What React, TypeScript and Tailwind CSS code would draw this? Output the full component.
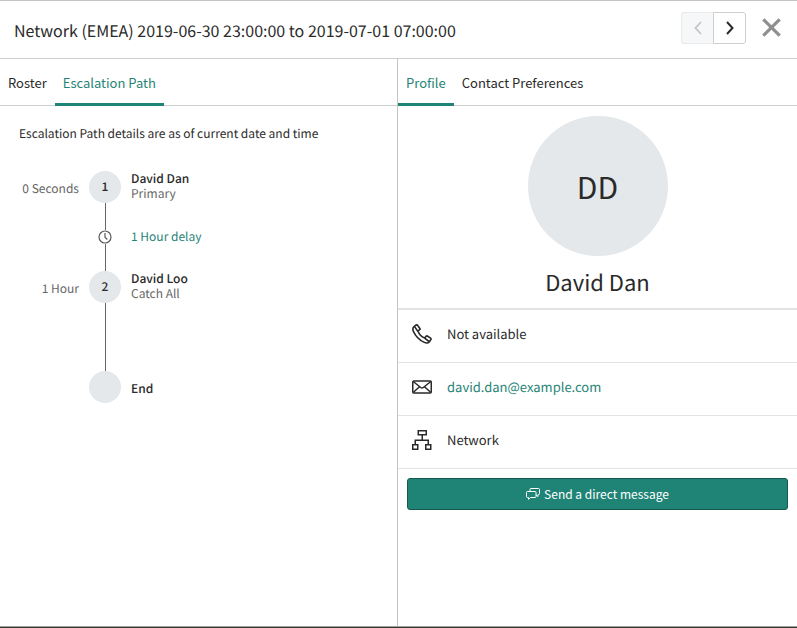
import React from 'react';

type Step = {
  time: string;
  badge: string;
  name: string;
  role?: string;
};

const steps: Step[] = [
  { time: '0 Seconds', badge: '1', name: 'David Dan', role: 'Primary' },
  { time: '1 Hour', badge: '2', name: 'David Loo', role: 'Catch All' },
  { time: '', badge: '', name: 'End' },
];

function ClockIcon() {
  return (
    <svg width="14" height="14" viewBox="0 0 14 14" fill="none" stroke="#5a5a5a" strokeWidth="1.2">
      <circle cx="7" cy="7" r="6" />
      <path d="M7 3v4.2l2.3 2.3" />
    </svg>
  );
}

function PhoneIcon() {
  return (
    <svg width="20" height="20" viewBox="0 0 20 20" fill="none" stroke="#2a2a2a" strokeWidth="1.6" strokeLinejoin="round">
      <path d="M2.2 2.4 4.2 1c.5-.3 1-.2 1.300.2L7.900 4.400c.3.4.2.9-.2 1.200L5.900 7.100c.9 2.600 4 5.900 6.800 6.900l1.400-1.800c.3-.4.8-.5 1.200-.2l3.300 2.200c.5.300.6.8.3 1.300l-1.500 2.200c-1.200 1.600-3.700 1.400-5.600.4C8 16.300 3.400 11.600 1.500 7.600.6 5.600.7 3.500 2.200 2.400Z" />
      <path d="m2.600 2.600 3.200 4.600M12.700 14.200l4.300 3.300" />
    </svg>
  );
}

function MailIcon() {
  return (
    <svg width="20" height="20" viewBox="0 0 20 20" fill="none" stroke="#2a2a2a" strokeWidth="1.5" strokeLinejoin="round">
      <rect x="0.75" y="4" width="18.5" height="12" rx="1" />
      <path d="m1.200 4.500 7.500 6c.8.7 1.800.7 2.600 0l7.500-6M1.200 15.500l6-5.500M18.800 15.500l-6-5.500" />
    </svg>
  );
}

function NetworkIcon() {
  return (
    <svg width="20" height="20" viewBox="0 0 20 20" fill="none" stroke="#2a2a2a" strokeWidth="1.5">
      <path d="M6.250.75h8v4h-8zM.75 14.750h5v4.500h-5zM13.750 14.750h5v4.500h-5zM10.250 4.750v5.500M3.250 14.750v-4.500h13v4.500" />
    </svg>
  );
}

function ChatIcon() {
  return (
    <svg width="14" height="12" viewBox="0 0 14 12" fill="none" stroke="white" strokeWidth="1" strokeLinejoin="round">
      <path d="M4 3.500V1.500a1 1 0 0 1 1-1h7.500a1 1 0 0 1 1 1v4a1 1 0 0 1-1 1h-.5v2l-2-1.500" />
      <path d="M1.500 3.500H9a1 1 0 0 1 1 1v4a1 1 0 0 1-1 1H4.500l-2 1.800V9.500h-1a1 1 0 0 1-1-1v-4a1 1 0 0 1 1-1Z" />
    </svg>
  );
}

function Tab({ label, active }: { label: string; active?: boolean }) {
  return (
    <button
      role="tab"
      aria-selected={!!active}
      className={
        active
          ? 'border-b-3 border-[#1f8476] px-2 pt-1 text-[#1f8476]'
          : 'border-b-3 border-transparent px-2 pt-1'
      }
    >
      {label}
    </button>
  );
}

function TabBar({ children }: { children: React.ReactNode }) {
  return (
    <div className="border-b border-[#cfcfcf]">
      <div role="tablist" className="-mb-px flex h-[47px] text-[13px]">
        {children}
      </div>
    </div>
  );
}

function StepRow({ step }: { step: Step }) {
  return (
    <div className="flex h-8 items-center">
      <span className="w-[79px] pt-1 text-right text-[#666]">{step.time}</span>
      <span className="mx-2.5 flex size-8 items-center justify-center rounded-full bg-[#e4e8eb] font-medium">
        {step.badge}
      </span>
      <div className={step.role ? 'pb-0.5 leading-[15px]' : 'pt-0.5 leading-[15px]'}>
        <div className="font-medium">{step.name}</div>
        {step.role && <div className="text-[#666]">{step.role}</div>}
      </div>
    </div>
  );
}

function DetailRow({ icon, children }: { icon: React.ReactNode; children: React.ReactNode }) {
  return (
    <li className="flex h-[53px] items-center gap-[15px] border-b border-[#e3e3e3] px-3.5 pb-1 text-[13px]">
      {icon}
      <span>{children}</span>
    </li>
  );
}

export default function App() {
  return (
    <div className="flex min-h-screen flex-col border-t border-[#c4c4c4] bg-white font-['Noto_Sans_CJK_SC',sans-serif] text-xs leading-4 text-[#2a2a2a] [text-rendering:geometricPrecision]">
      {/* Header */}
      <header className="flex h-[58px] items-center justify-between border-b border-[#cfcfcf] pr-4 pb-1 pl-3.5">
        <h1 className="pt-1 text-base">Network (EMEA) 2019-06-30 23:00:00 to 2019-07-01 07:00:00</h1>
        <div className="flex items-center">
          <button
            disabled
            aria-label="Previous"
            className="flex h-8 w-8 items-center justify-center rounded-l-[3px] border border-r-0 border-[#e8eaec] bg-[#f6f7f8] text-[#c4c4c4]"
          >
            <svg width="8" height="14" viewBox="0 0 8 14" fill="none" stroke="currentColor" strokeWidth="1.8">
              <path d="M7 1 1.500 7 7 13" />
            </svg>
          </button>
          <button
            aria-label="Next"
            className="flex h-8 w-[33px] items-center justify-center rounded-r-[3px] border border-[#cfcfcf]"
          >
            <svg width="8" height="14" viewBox="0 0 8 14" fill="none" stroke="currentColor" strokeWidth="2">
              <path d="m1 1 5.500 6L1 13" />
            </svg>
          </button>
          <button aria-label="Close" className="ml-4 text-[#8f8f8f]">
            <svg width="19" height="19" viewBox="0 0 19 19" fill="none" stroke="currentColor" strokeWidth="3.200">
              <path d="m1.300 1.300 16.400 16.400M17.700 1.300 1.300 17.700" />
            </svg>
          </button>
        </div>
      </header>

      <main className="grid flex-1 grid-cols-[398fr_399fr]">
        {/* Escalation path */}
        <section className="border-r border-[#c4c4c4]">
          <TabBar>
            <Tab label="Roster" />
            <Tab label="Escalation Path" active />
          </TabBar>
          <p className="mt-5 ml-[19px]">Escalation Path details are as of current date and time</p>
          <div className="mt-[29px]">
            <StepRow step={steps[0]} />
            <div className="flex h-[68px] items-center">
              <div className="ml-[89px] flex h-full w-8 flex-col items-center">
                <span className="w-px flex-1 bg-[#666]" />
                <ClockIcon />
                <span className="w-px flex-1 bg-[#666]" />
              </div>
              <a href="#delay" className="ml-2.5 text-[#1f8476]">
                1 Hour delay
              </a>
            </div>
            <StepRow step={steps[1]} />
            <div className="ml-[89px] flex h-[68px] w-8 justify-center">
              <span className="w-px bg-[#666]" />
            </div>
            <StepRow step={steps[2]} />
          </div>
        </section>

        {/* Profile */}
        <section>
          <TabBar>
            <Tab label="Profile" active />
            <Tab label="Contact Preferences" />
          </TabBar>
          <div className="flex flex-col items-center border-b-2 border-[#e3e3e3] pt-2.5 pb-2.5">
            <div className="flex size-[140px] items-center justify-center rounded-full bg-[#e4e8eb] text-[30px]">DD</div>
            <h2 className="mt-2.5 text-[22px] leading-8">David Dan</h2>
          </div>
          <ul>
            <DetailRow icon={<PhoneIcon />}>Not available</DetailRow>
            <DetailRow icon={<MailIcon />}>
              <a href="mailto:david.dan@example.com" className="text-[#1f8476]">
                david.dan@example.com
              </a>
            </DetailRow>
            <DetailRow icon={<NetworkIcon />}>Network</DetailRow>
          </ul>
          <div className="px-[9px] pt-[9px]">
            <button className="flex h-8 w-full items-center justify-center gap-1 rounded-[3px] border border-[#16594f] bg-[#1f8476] text-white">
              <ChatIcon />
              Send a direct message
            </button>
          </div>
        </section>
      </main>

      <footer className="h-0.5 border-t border-[#a0a0a0] bg-[#333a30]" />
    </div>
  );
}
